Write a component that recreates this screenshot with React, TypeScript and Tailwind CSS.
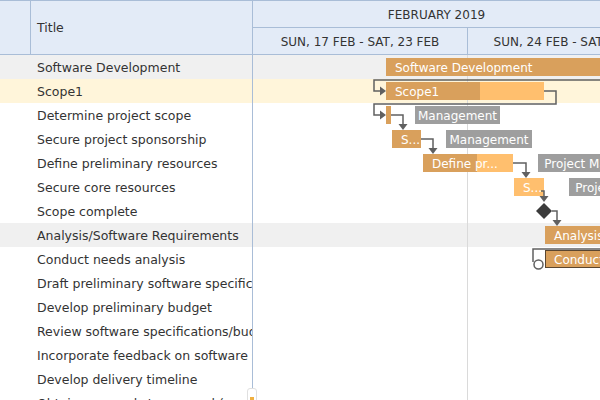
import React from "react";

const rows: { title: string; bg?: string }[] = [
  { title: "Software Development", bg: "bg-[#f0f0f0]" },
  { title: "Scope1", bg: "bg-[#fff5da]" },
  { title: "Determine project scope" },
  { title: "Secure project sponsorship" },
  { title: "Define preliminary resources" },
  { title: "Secure core resources" },
  { title: "Scope complete" },
  { title: "Analysis/Software Requirements", bg: "bg-[#f0f0f0]" },
  { title: "Conduct needs analysis" },
  { title: "Draft preliminary software specifications" },
  { title: "Develop preliminary budget" },
  { title: "Review software specifications/budget with team" },
  { title: "Incorporate feedback on software specifications" },
  { title: "Develop delivery timeline" },
  { title: "Obtain approvals to proceed (concept, timeline, budget)" },
];

type Bar = {
  row: number;
  left: number;
  width: number;
  progress?: number;
  text: string;
  kind: "dark" | "light" | "label" | "selected";
};

const bars: Bar[] = [
  { row: 0, left: 133, width: 420, text: "Software Development", kind: "dark" },
  { row: 1, left: 133, width: 158, progress: 94, text: "Scope1", kind: "light" },
  { row: 2, left: 133, width: 5, progress: 5, text: "", kind: "light" },
  { row: 2, left: 162, width: 85, text: "Management", kind: "label" },
  { row: 3, left: 139, width: 29, progress: 29, text: "S...", kind: "light" },
  { row: 3, left: 193, width: 86, text: "Management", kind: "label" },
  { row: 4, left: 170, width: 90, progress: 54, text: "Define pr...", kind: "light" },
  { row: 4, left: 285, width: 110, text: "Project Manager", kind: "label" },
  { row: 5, left: 261, width: 30, text: "S...", kind: "light" },
  { row: 5, left: 316, width: 110, text: "Project Manager", kind: "label" },
  { row: 7, left: 292, width: 200, text: "Analysis/Software Requirements", kind: "dark" },
  { row: 8, left: 292, width: 200, text: "Conduct needs analysis", kind: "selected" },
];

function GanttBar({ b }: { b: Bar }) {
  const base =
    b.kind === "dark"
      ? "bg-[#d9a05c]"
      : b.kind === "label"
      ? "bg-[#9e9e9e] justify-center"
      : b.kind === "selected"
      ? "bg-[#d9a05c] border border-[#5a4630]"
      : "bg-[#ffbf6e]";
  return (
    <div
      className={`absolute h-[18px] flex items-center overflow-hidden text-white text-[12px] whitespace-nowrap ${base}`}
      style={{ left: b.left, top: b.row * 24 + 3, width: b.width }}
    >
      {b.progress !== undefined && (
        <div className="absolute left-0 top-0 h-full bg-[#d9a05c]" style={{ width: b.progress }} />
      )}
      {b.text && (
        <span
          className={`relative pt-px ${
            b.kind === "label" ? "px-[5px]" : b.kind === "selected" ? "pl-[8px]" : "pl-[9px]"
          }`}
        >
          {b.text}
        </span>
      )}
    </div>
  );
}

function Connectors() {
  const s = "#606060";
  return (
    <svg className="absolute left-0 top-0" width="360" height="360" viewBox="0 0 360 360">
      <g fill="none" stroke={s} strokeWidth="1.5">
        <path d="M 360 25 H 121 V 36 H 128" />
        <path d="M 291 36 H 303 V 49 H 121 V 60 H 128" />
        <path d="M 138 60 H 150 V 70" />
        <path d="M 168 84 H 180 V 94" />
        <path d="M 260 108 H 273 V 118" />
        <path d="M 288 136 H 291 V 142" />
        <path d="M 299 156 H 304 V 166" />
        <path d="M 360 194 H 280 V 207" />
      </g>
      <g fill={s}>
        <polygon points="127,31.5 133,36 127,40.5" />
        <polygon points="127,55.5 133,60 127,64.5" />
        <polygon points="145.5,69 154.5,69 150,75" />
        <polygon points="175.5,93 184.5,93 180,99" />
        <polygon points="268.5,117 277.5,117 273,123" />
        <polygon points="286.5,141 295.5,141 291,147" />
        <polygon points="299.5,165 308.5,165 304,171" />
      </g>
      <polygon points="291,148 299,156 291,164 283,156" fill="#3b3b3b" />
      <circle cx="285.5" cy="209.5" r="4.5" fill="#ffffff" stroke={s} strokeWidth="1.5" />
    </svg>
  );
}

export default function App() {
  return (
    <div className="w-[600px] h-[400px] overflow-hidden flex relative bg-white text-[#333333] font-['DejaVu_Sans',sans-serif]">
      {/* Left grid */}
      <div className="w-[253px] shrink-0 flex flex-col border-r border-[#a9bdd7]">
        <div className="h-[55px] shrink-0 flex border-t border-b border-[#a9bdd7] bg-[#e3ebf7]">
          <div className="w-[31px] border-r border-[#a9bdd7]" />
          <div className="flex-1 flex items-center pl-[6px] pt-px text-[12.5px]">Title</div>
        </div>
        {rows.map((r, i) => (
          <div
            key={i}
            className={`h-[24px] shrink-0 flex items-center pl-[37px] pt-[2px] text-[12.5px] whitespace-nowrap overflow-hidden ${r.bg ?? ""}`}
          >
            {r.title}
          </div>
        ))}
      </div>

      {/* Chart */}
      <div className="flex-1 flex flex-col overflow-hidden">
        <div className="h-[55px] shrink-0 flex flex-col border-t border-b border-[#a9bdd7] bg-[#e3ebf7] text-[12px] whitespace-nowrap">
          <div className="h-[27px] shrink-0 flex border-b border-[#a9bdd7]">
            <div className="w-[368px] shrink-0 flex items-center justify-center pt-px border-r border-[#a9bdd7]">
              FEBRUARY 2019
            </div>
          </div>
          <div className="flex-1 flex">
            <div className="w-[215px] shrink-0 flex items-center justify-center pt-px border-r border-[#a9bdd7]">
              SUN, 17 FEB - SAT, 23 FEB
            </div>
            <div className="w-[215px] shrink-0 flex items-center justify-center pt-px border-r border-[#a9bdd7]">
              SUN, 24 FEB - SAT, 02 MAR
            </div>
          </div>
        </div>
        <div className="relative flex-1">
          {rows.map((r, i) => (
            <div key={i} className={`h-[24px] ${r.bg ?? ""}`} />
          ))}
          <div className="absolute left-[214px] top-0 bottom-0 w-px bg-[#dadada]" />
          {bars.map((b, i) => (
            <GanttBar key={i} b={b} />
          ))}
          <Connectors />
        </div>
      </div>

      {/* splitter handle */}
      <div className="absolute left-[247px] top-[388px] w-[10px] h-[16px] rounded-[3px] bg-white border border-[#e0e0e0] flex justify-center">
        <div className="mt-[8px] w-[4px] h-[6px] bg-[#f0b040]" />
      </div>
    </div>
  );
}
